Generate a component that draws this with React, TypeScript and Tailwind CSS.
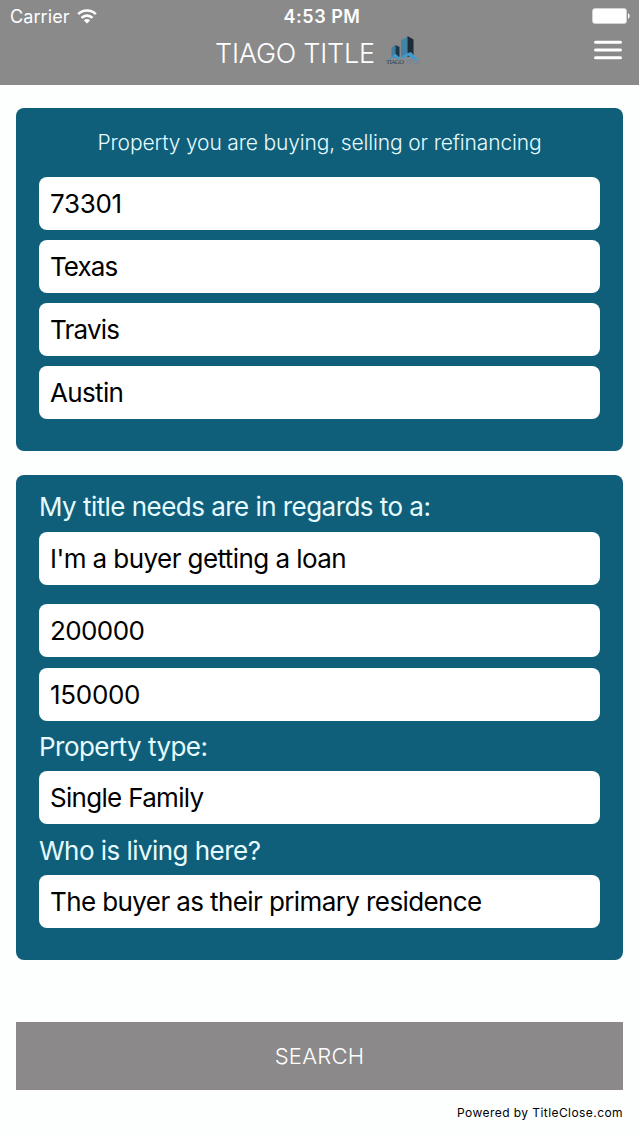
interface FieldProps {
  value: string
  className?: string
}

function Field({ value, className = 'tracking-[-0.6px]' }: FieldProps) {
  return (
    <div
      className={`flex h-[53px] shrink-0 items-center rounded-lg bg-white pl-[11px] text-[26px] whitespace-nowrap text-black ${className}`}
    >
      {value}
    </div>
  )
}

function Label({ children }: { children: string }) {
  return (
    <p className="text-[26px] leading-[32px] font-normal tracking-[-0.54px] whitespace-nowrap text-[#e6fbff]">
      {children}
    </p>
  )
}

function WifiIcon() {
  return (
    <svg className="h-[15px] w-5" viewBox="0 0 20 15" fill="none" stroke="#fff" strokeWidth="2.6">
      <path d="M1.2 5.1a12.6 12.6 0 0 1 17.6 0" />
      <path d="M4.5 8.9a7.9 7.9 0 0 1 11 0" />
      <path d="M10 14.4 6.9 11.4a4.4 4.4 0 0 1 6.2 0Z" fill="#fff" stroke="none" />
    </svg>
  )
}

function BatteryIcon() {
  return (
    <svg className="h-4 w-[38px]" viewBox="0 0 38 16">
      <rect x="0.5" y="0.5" width="34" height="15" rx="2.5" fill="#fff" stroke="#d2d2d2" />
      <path d="M36 5.3c2.2.9 2.2 4.5 0 5.4Z" fill="#fff" />
    </svg>
  )
}

function MenuIcon() {
  return (
    <svg className="h-5 w-[29px]" viewBox="0 0 29 20" stroke="#fff" strokeWidth="3" strokeLinecap="round">
      <path d="M2.5 2.3h25M2.5 10h25M2.5 17.7h25" />
    </svg>
  )
}

function TiagoLogo() {
  return (
    <svg className="h-[31px] w-[35px]" viewBox="0 0 35 31">
      <path d="M5.5 12.5 9.5 10v12.5h-4Z" fill="#437c9f" />
      <path d="M9.5 10 13.5 12v9.5l-4 1.5Z" fill="#1b3849" />
      <path d="M15 5.5 21.5 1.5V21L15 22Z" fill="#4283a8" />
      <path d="M21.5 1 27.5 4.5V21l-6 1Z" fill="#1d2d38" />
      <path
        d="M2 25.5 9 18.5l2.5 2 2 2.5 7-4.5 4.5-1.5 4 4.5 5 4-8-1.5-4-3.5-4 3-3-.8-3 2-5-3-2 2.5Z"
        fill="#4399c9"
      />
      <text x="0" y="28.8" fontSize="6.6" fontFamily="Liberation Serif, serif" textLength="18" fill="#2c4352">
        TIAGO
      </text>
      <text x="19" y="28.8" fontSize="6.6" fontFamily="Liberation Serif, serif" textLength="15" fill="#6389a0">
        TITLE
      </text>
    </svg>
  )
}

export default function App() {
  return (
    <div className="flex h-[1136px] w-[639px] flex-col overflow-hidden bg-[#fdfefe] font-['Inter',sans-serif]">
      <header className="h-[85px] shrink-0 bg-[#8b8a8a] text-white">
        <div className="grid h-8 grid-cols-3 items-center pr-[9px] pl-[10px]">
          <div className="flex items-center gap-[7px]">
            <span className="text-[18px] tracking-[0.1px]">Carrier</span>
            <WifiIcon />
          </div>
          <span className="pl-1 text-center text-[18px] font-semibold tracking-[0.5px]">4:53 PM</span>
          <div className="flex justify-end">
            <BatteryIcon />
          </div>
        </div>
        <div className="grid h-[42px] grid-cols-[215px_1fr_46px] items-center">
          <span />
          <div className="flex items-center gap-[11px]">
            <h1 className="pt-[2px] text-[27px] font-light tracking-[-0.25px] whitespace-nowrap">TIAGO TITLE</h1>
            <div className="-mt-[5px]">
              <TiagoLogo />
            </div>
          </div>
          <button className="-mt-[6px]" aria-label="Menu">
            <MenuIcon />
          </button>
        </div>
      </header>

      <main className="flex flex-col px-4 pt-[23px]">
        <section className="flex h-[343px] flex-col gap-[10px] rounded-lg bg-[#105f7a] px-[23px] pt-[19px]">
          <h2 className="mb-[8px] h-[32px] text-center text-[21px] leading-[32px] font-light tracking-[-0.15px] whitespace-nowrap text-[#e6fbff]">
            Property you are buying, selling or refinancing
          </h2>
          <Field value="73301" className="tracking-[-0.3px]" />
          <Field value="Texas" className="tracking-[-0.9px]" />
          <Field value="Travis" className="tracking-[-0.8px]" />
          <Field value="Austin" className="tracking-[-0.65px]" />
        </section>

        <section className="mt-6 flex h-[485px] flex-col rounded-lg bg-[#105f7a] px-[23px] pt-4">
          <Label>My title needs are in regards to a:</Label>
          <Field value="I'm a buyer getting a loan" className="mt-[9px] tracking-[-0.57px]" />
          <Field value="200000" className="mt-[19px] tracking-[-0.6px]" />
          <Field value="150000" className="mt-[11px] mb-[10px] tracking-[-0.3px]" />
          <Label>Property type:</Label>
          <Field value="Single Family" className="mt-[8px] mb-[11px] tracking-[-0.7px]" />
          <Label>Who is living here?</Label>
          <Field value="The buyer as their primary residence" className="mt-[8px] tracking-[-0.6px]" />
        </section>

        <button className="mt-[62px] h-[68px] bg-[#8b8989] text-[22px] font-light tracking-[0.25px] text-white">
          SEARCH
        </button>
        <p className="mt-[14px] text-right text-[12px] leading-[18px] tracking-[0.43px] text-black">
          Powered by TitleClose.com
        </p>
      </main>
    </div>
  )
}
